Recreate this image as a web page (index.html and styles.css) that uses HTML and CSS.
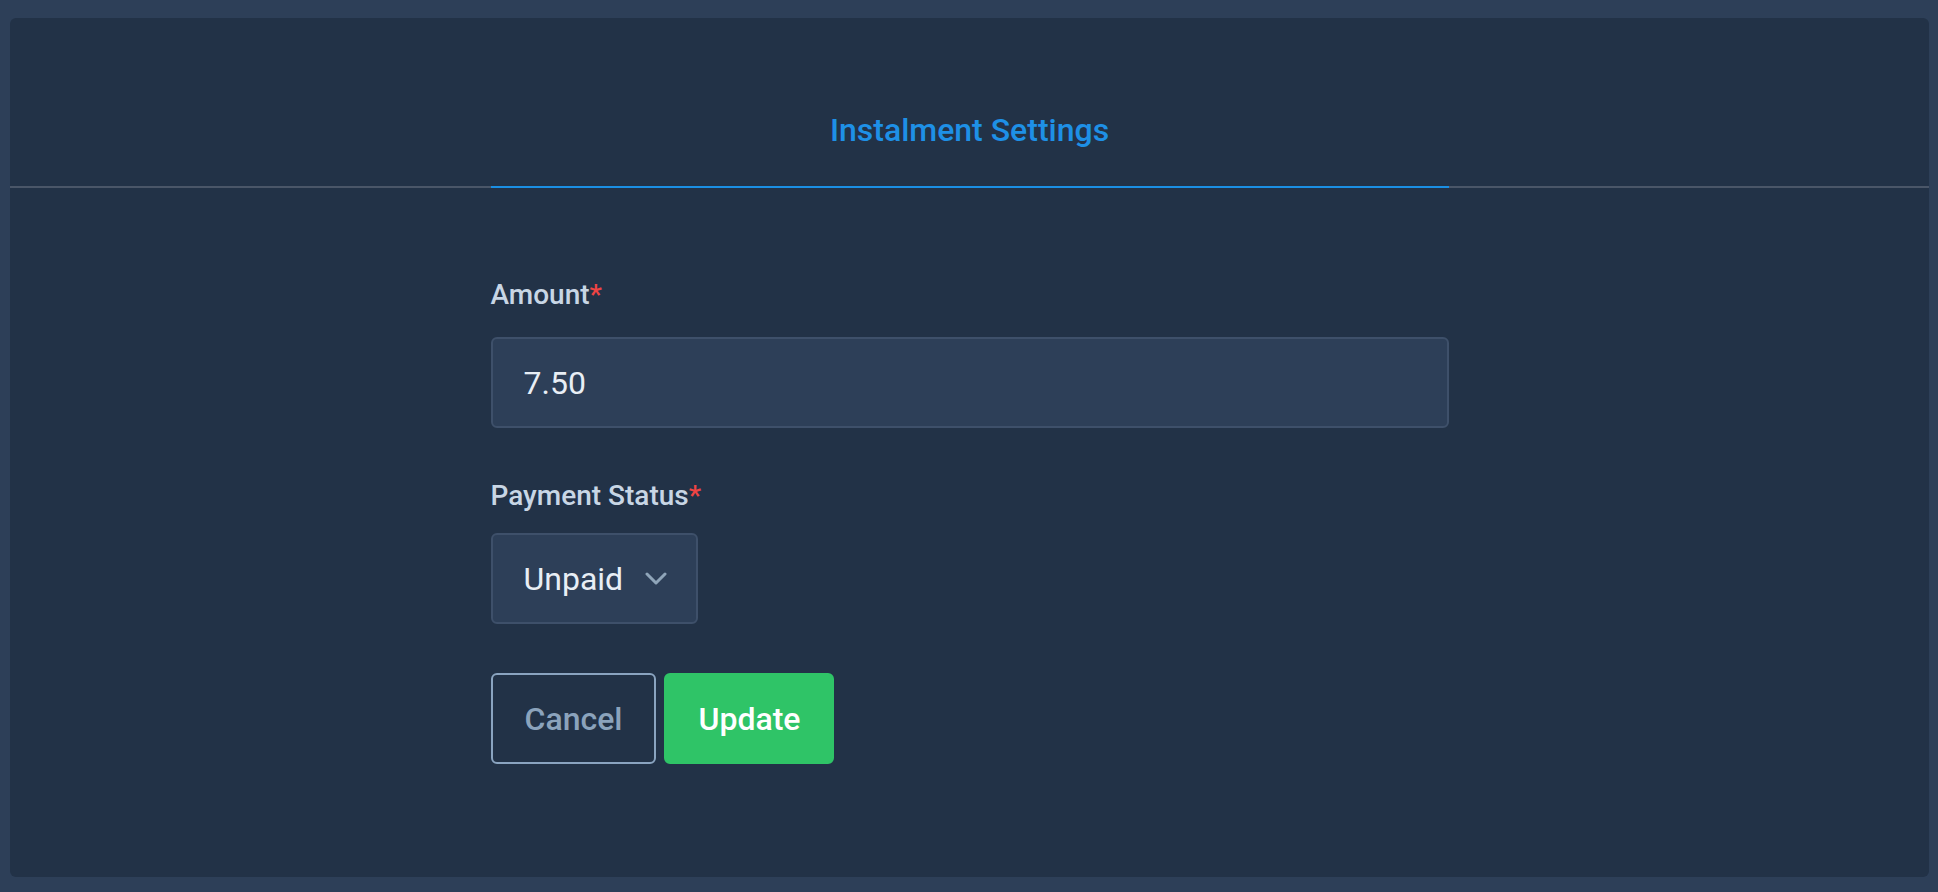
FILE: index.html
```html
<!DOCTYPE html>
<html lang="en">
<head>
<meta charset="utf-8">
<title>Instalment Settings</title>
<link rel="stylesheet" href="styles.css">
</head>
<body>
<div class="card">
  <div class="tabs">
    <div class="tab">Instalment Settings</div>
  </div>
  <form class="form">
    <div class="field">
      <label class="label">Amount<span class="req">*</span></label>
      <input class="input" type="text" value="7.50">
    </div>
    <div class="field field-status">
      <label class="label">Payment Status<span class="req">*</span></label>
      <div class="select">
        <span class="select-value">Unpaid</span>
        <svg class="chevron" width="22" height="13" viewBox="0 0 22 13" fill="none">
          <path d="M2 2 L11 11 L20 2" stroke="#8fa5b9" stroke-width="3" stroke-linecap="round" stroke-linejoin="round"/>
        </svg>
      </div>
    </div>
    <div class="actions">
      <button type="button" class="btn btn-cancel">Cancel</button>
      <button type="button" class="btn btn-update">Update</button>
    </div>
  </form>
</div>
</body>
</html>
```

FILE: styles.css
```css
* { box-sizing: border-box; }
html, body { margin: 0; }
body {
  height: 892px;
  padding: 18px 9px 15px 10px;
  background: #2d3f58;
  font-family: Roboto, "Liberation Sans", sans-serif;
}
.card {
  height: 100%;
  background: #223247;
  border-radius: 6px;
  overflow: hidden;
}
.tabs {
  display: flex;
  justify-content: center;
  border-bottom: 2px solid #4a5668;
}
.tab {
  width: 958px;
  text-align: center;
  font-size: 32px;
  font-weight: 500;
  line-height: 40px;
  color: #1e90e6;
  padding: 92px 0 36px;
  border-bottom: 2px solid #1b8fe3;
  margin-bottom: -2px;
}
.form {
  width: 958px;
  margin: 0 auto;
  padding-top: 89px;
  display: flex;
  flex-direction: column;
  align-items: flex-start;
}
.field {
  display: flex;
  flex-direction: column;
  align-items: flex-start;
  width: 100%;
}
.field-status { margin-top: 50px; }
.label {
  font-size: 28px;
  font-weight: 500;
  line-height: 36px;
  color: #c8d6e5;
  margin-bottom: 24px;
}
.field-status .label { margin-bottom: 19px; }
.req { color: #ef4444; }
.input {
  width: 100%;
  height: 91px;
  background: #2d3f58;
  border: 2px solid #3e506a;
  border-radius: 6px;
  padding: 0 31px;
  font-family: Roboto, "Liberation Sans", sans-serif;
  font-size: 32px;
  color: #e8eef5;
  outline: none;
}
.select {
  display: inline-flex;
  align-items: center;
  height: 91px;
  background: #2d3f58;
  border: 2px solid #3e506a;
  border-radius: 6px;
  padding: 0 29px 0 31px;
  font-size: 32px;
  color: #e8eef5;
}
.chevron { margin-left: 22px; display: block; }
.actions {
  display: flex;
  gap: 8px;
  margin-top: 49px;
}
.btn {
  height: 91px;
  border-radius: 6px;
  font-family: Roboto, "Liberation Sans", sans-serif;
  font-size: 32px;
  font-weight: 500;
  cursor: pointer;
}
.btn-cancel {
  background: transparent;
  border: 2px solid #8aa4c0;
  color: #8ba3bc;
  padding: 0 32px;
}
.btn-update {
  background: #2fc467;
  border: 2px solid #2fc467;
  color: #ffffff;
  padding: 0 32px;
}
```
